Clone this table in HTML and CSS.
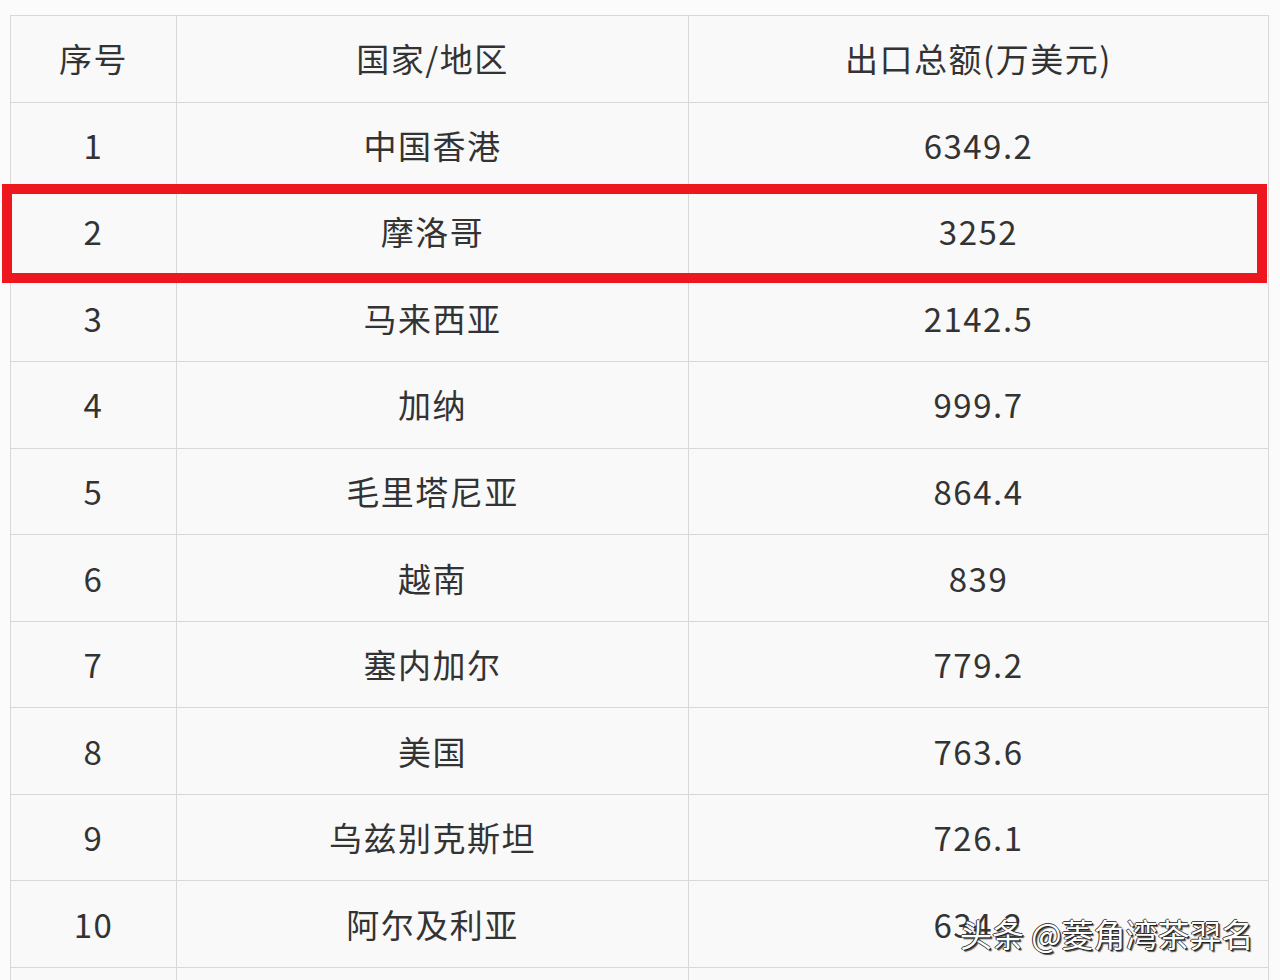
FILE: index.html
```html
<!DOCTYPE html>
<html lang="zh">
<head>
<meta charset="utf-8">
<link rel="stylesheet" href="styles.css">
</head>
<body>
<div class="wrap">
  <table class="data">
    <colgroup><col class="c1"><col class="c2"><col class="c3"></colgroup>
    <thead>
      <tr><th>序号</th><th>国家/地区</th><th>出口总额(万美元)</th></tr>
    </thead>
    <tbody>
      <tr><td>1</td><td>中国香港</td><td>6349.2</td></tr>
      <tr><td>2</td><td>摩洛哥</td><td>3252</td></tr>
      <tr><td>3</td><td>马来西亚</td><td>2142.5</td></tr>
      <tr><td>4</td><td>加纳</td><td>999.7</td></tr>
      <tr><td>5</td><td>毛里塔尼亚</td><td>864.4</td></tr>
      <tr><td>6</td><td>越南</td><td>839</td></tr>
      <tr><td>7</td><td>塞内加尔</td><td>779.2</td></tr>
      <tr><td>8</td><td>美国</td><td>763.6</td></tr>
      <tr><td>9</td><td>乌兹别克斯坦</td><td>726.1</td></tr>
      <tr><td>10</td><td>阿尔及利亚</td><td>634.2</td></tr>
      <tr><td></td><td></td><td></td></tr>
    </tbody>
  </table>
  <div class="highlight"></div>
  <div class="watermark">头条 @菱角湾茶羿名</div>
</div>
</body>
</html>
```
FILE: styles.css
```css
html, body {
  margin: 0;
  padding: 0;
  background: #fbfbfb;
}
body {
  font-family: "Noto Sans CJK SC", "Noto Sans", sans-serif;
  color: #333333;
  height: 980px;
  overflow: hidden;
}
.wrap {
  position: relative;
  margin: 15px 0 0 10px;
  width: 1259px;
}
.data {
  border-collapse: collapse;
  table-layout: fixed;
  width: 1259px;
  background: #f9f9f9;
}
.c1 { width: 166px; }
.c2 { width: 512px; }
.c3 { width: 580px; }
.data th, .data td {
  border: 1px solid #d8d8d8;
  height: 85.55px;
  padding: 0;
  text-align: center;
  vertical-align: middle;
  font-size: 33px;
  font-weight: normal;
  letter-spacing: 1.5px;
  line-height: 1;
  box-sizing: border-box;
}
.data tr { height: 86.55px; }
.highlight {
  position: absolute;
  left: -8px;
  top: 169px;
  width: 1265px;
  height: 99px;
  border: 10px solid #ee161f;
  box-sizing: border-box;
}
.watermark {
  position: absolute;
  left: 950px;
  top: 902px;
  font-size: 32px;
  line-height: 1;
  color: #ffffff;
  letter-spacing: 0;
  text-shadow: 1px 1px 0 #222, -1px 0 0 #333, 0 -1px 0 #444, 2px 2px 1px #555;
  white-space: nowrap;
}
```
